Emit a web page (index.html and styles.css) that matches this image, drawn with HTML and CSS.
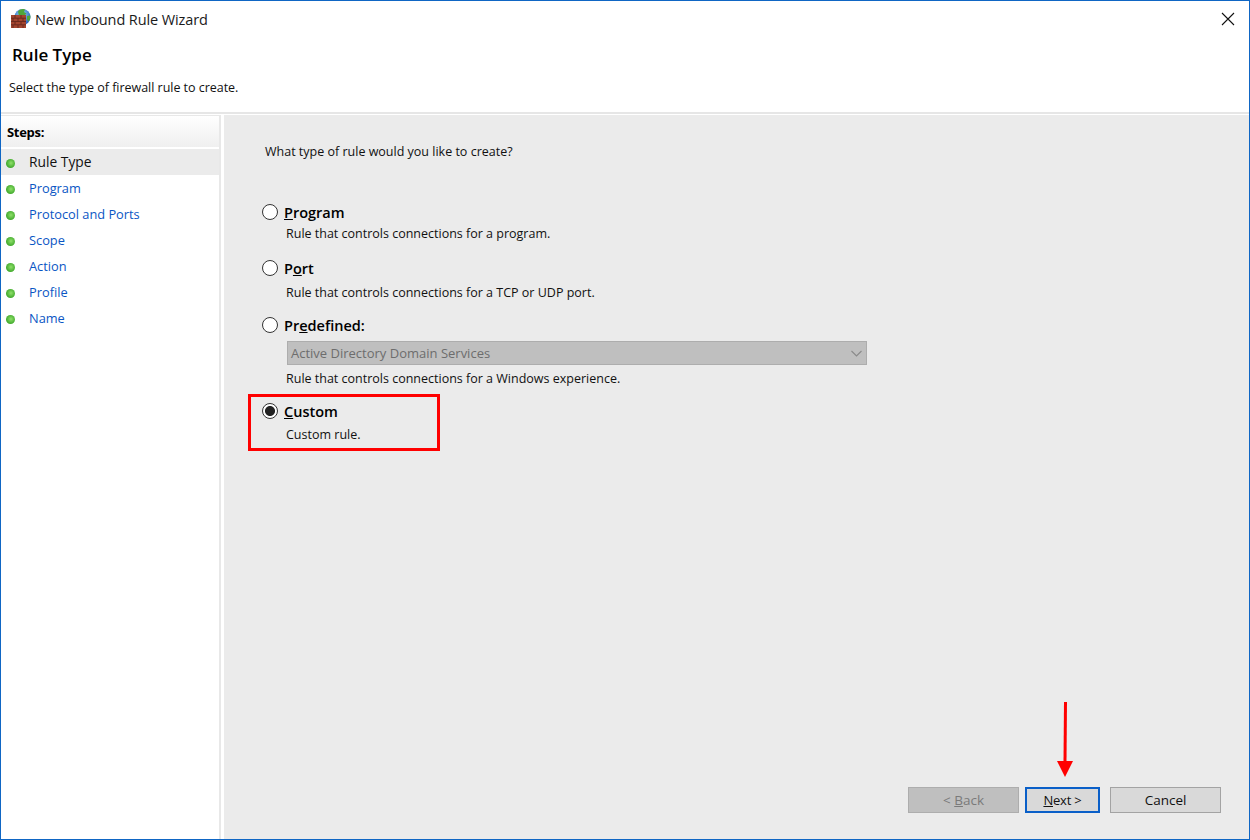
FILE: index.html
```html
<!DOCTYPE html>
<html lang="en">
<head>
<meta charset="utf-8">
<title>New Inbound Rule Wizard</title>
<link rel="stylesheet" href="styles.css">
</head>
<body>
<div class="window">
  <header class="header">
    <div class="titlebar">
      <svg class="app-icon" width="22" height="22" viewBox="0 0 22 22">
        <defs>
          <radialGradient id="globe" cx="0.45" cy="0.35" r="0.7">
            <stop offset="0" stop-color="#9ad6f7"/>
            <stop offset="1" stop-color="#1a55b8"/>
          </radialGradient>
        </defs>
        <circle cx="12.500" cy="9" r="8" fill="url(#globe)"/>
        <path d="M8 3.500c2-2.500 5-3 7-2l-1 2.500 2.500 1.500-2.500 2.500-2-1-3 1.500z" fill="#4fa63c"/>
        <path d="M17 8l3.400-.5c.2 2.500-.5 4.500-1.900 6l-1.500-2z" fill="#4fa63c"/>
        <rect x="1" y="7" width="15" height="13" fill="#a3452f"/>
        <path d="M1 10.200h15M1 13.500h15M1 16.800h15M5 7v3M11 7v3M3 10v3.500M8 10v3.500M13 10v3.500M5 13.500v3.500M11 13.500v3.500M3 17v3M8 17v3M13 17v3" stroke="#6d2a1e" stroke-width="1" fill="none"/>
      </svg>
      <span class="title">New Inbound Rule Wizard</span>
      <svg class="close" width="14" height="14" viewBox="0 0 14 14">
        <path d="M1 1l12 12M13 1L1 13" stroke="#111" stroke-width="1.100" fill="none"/>
      </svg>
    </div>
    <h1 class="page-title">Rule Type</h1>
    <p class="page-sub">Select the type of firewall rule to create.</p>
  </header>

  <div class="main">
    <nav class="steps">
      <div class="steps-head">Steps:</div>
      <ul class="step-list">
        <li class="step current"><span class="dot"></span>Rule Type</li>
        <li class="step"><span class="dot"></span>Program</li>
        <li class="step"><span class="dot"></span>Protocol and Ports</li>
        <li class="step"><span class="dot"></span>Scope</li>
        <li class="step"><span class="dot"></span>Action</li>
        <li class="step"><span class="dot"></span>Profile</li>
        <li class="step"><span class="dot"></span>Name</li>
      </ul>
    </nav>

    <section class="content">
      <p class="question">What type of rule would you like to create?</p>

      <div class="options">
        <div class="option opt-program">
          <div class="opt-label"><span class="radio"></span><b><u>P</u>rogram</b></div>
          <p class="opt-desc">Rule that controls connections for a program.</p>
        </div>
        <div class="option opt-port">
          <div class="opt-label"><span class="radio"></span><b>P<u>o</u>rt</b></div>
          <p class="opt-desc">Rule that controls connections for a TCP or UDP port.</p>
        </div>
        <div class="option opt-predefined">
          <div class="opt-label"><span class="radio"></span><b>Pr<u>e</u>defined:</b></div>
          <div class="select">
            <span>Active Directory Domain Services</span>
            <svg width="11" height="7" viewBox="0 0 11 7"><path d="M.5 1l5 5 5-5" stroke="#8a8a8a" stroke-width="1.100" fill="none"/></svg>
          </div>
          <p class="opt-desc">Rule that controls connections for a Windows experience.</p>
        </div>
        <div class="option opt-custom">
          <div class="opt-label"><span class="radio checked"></span><b><u>C</u>ustom</b></div>
          <p class="opt-desc">Custom rule.</p>
          <div class="highlight"></div>
        </div>
      </div>

      <div class="buttons">
        <button class="btn disabled" type="button">&lt; <u>B</u>ack</button>
        <button class="btn primary" type="button"><u>N</u>ext &gt;</button>
        <button class="btn cancel" type="button">Cancel</button>
        <svg class="arrow" width="20" height="76" viewBox="0 0 20 76">
          <path d="M10.500 0L10 60" stroke="#f00" stroke-width="3" fill="none"/>
          <path d="M2 59h16l-8 16z" fill="#f00"/>
        </svg>
      </div>
    </section>
  </div>
</div>
</body>
</html>
```
FILE: styles.css
```css
* { box-sizing: border-box; }
html, body { margin: 0; padding: 0; }
body {
  width: 1250px;
  height: 840px;
  font-family: "Open Sans", "Noto Sans", "Liberation Sans", sans-serif;
  font-size: 12.5px;
  color: #111;
  background: #fff;
  overflow: hidden;
}
p, h1, ul { margin: 0; padding: 0; }
.window {
  width: 1250px;
  height: 840px;
  border: 1px solid #0f66c4;
  display: flex;
  flex-direction: column;
  background: #fff;
}
.header {
  height: 113px;
  flex: none;
  border-bottom: 2px solid #e6e6e6;
  padding-top: 7px;
}
.titlebar {
  display: flex;
  align-items: center;
  height: 22px;
  padding-left: 9px;
  padding-right: 14px;
}
.app-icon { flex: none; margin-right: 3px; }
.title { font-size: 14.5px; letter-spacing: -0.1px; color: #1a1a1a; flex: 1; }
.close { flex: none; }
.page-title {
  font-size: 17px;
  font-weight: 600;
  line-height: 22px;
  margin: 14px 0 0 11px;
  color: #000;
}
.page-sub {
  line-height: 18px;
  margin: 13px 0 0 8px;
  letter-spacing: -0.03px;
}
.main {
  flex: 1;
  display: flex;
  min-height: 0;
  padding-top: 1px;
  gap: 3px;
}
.steps {
  width: 220px;
  flex: none;
  border-right: 2px solid #e8e8e8;
  border-top: 1px solid #e8e8e8;
  background: #fff;
}
.steps-head {
  height: 31px;
  padding-left: 6px;
  padding-top: 1px;
  line-height: 30px;
  font-size: 13px;
  font-weight: 700;
  background: linear-gradient(#fff, #efefef);
  color: #000;
  letter-spacing: -0.3px;
}
.step-list { list-style: none; margin-top: 2px; font-size: 12.8px; }
.step {
  height: 26px;
  display: flex;
  align-items: center;
  padding-left: 5px;
  color: #0a56c4;
}
.step.current { background: #ebebeb; color: #111; font-size: 13.8px; padding-bottom: 2px; }
.dot {
  width: 9px;
  height: 9px;
  border-radius: 50%;
  margin-right: 14px;
  flex: none;
  background: radial-gradient(circle at 55% 45%, #8fe06a, #3fa82b 70%);
  position: relative;
  top: 1px;
}
.current .dot { top: 2px; }
.content {
  flex: 1;
  background: #ebebeb;
  display: flex;
  flex-direction: column;
  padding-left: 41px;
  min-width: 0;
}
.question { margin-top: 28px; line-height: 18px; }
.options { margin-left: -3px; margin-top: 42px; flex: 1; }
.option { position: relative; }
.opt-label {
  display: flex;
  align-items: center;
  height: 20px;
  font-size: 14.5px;
  color: #000;
}
.opt-label b { font-weight: 600; margin-left: 6px; padding-bottom: 2px; }
.radio {
  width: 16px;
  height: 16px;
  border-radius: 50%;
  border: 1.500px solid #333;
  background: #fff;
  flex: none;
  position: relative;
  top: -1px;
}
.radio.checked { background: radial-gradient(circle, #222 0 4.600px, #fff 5.400px); }
.opt-desc { margin: 2px 0 0 24px; line-height: 18px; }
.opt-port { margin-top: 16px; }
.opt-predefined { margin-top: 14px; }
.opt-custom { margin-top: 14px; }
.opt-port .opt-desc { margin-top: 5px; }
.opt-custom .opt-desc { margin-top: 4px; }
.select {
  width: 580px;
  height: 24px;
  margin: 5px 0 0 25px;
  background: #bfbfbf;
  border: 1px solid #adadad;
  display: flex;
  align-items: center;
  justify-content: space-between;
  padding: 0 4px 0 3px;
  color: #6d6d6d;
  font-size: 13px;
}
.opt-predefined .opt-desc { margin-top: 5px; }
.highlight {
  position: absolute;
  left: -14px;
  top: -8px;
  width: 192px;
  height: 57px;
  border: 3px solid #f00;
}
.buttons {
  position: relative;
  display: flex;
  padding-left: 643px;
  height: 52px;
  flex: none;
}
.btn {
  height: 26px;
  font: inherit;
  font-size: 13.5px;
  color: #111;
  background: #d9d9d9;
  border: 1px solid #a3a3a3;
  padding: 0;
}
.btn.disabled { width: 111px; background: #bfbfbf; border-color: #adadad; color: #7a7a7a; }
.btn.primary { width: 75px; margin-left: 6px; border: 2px solid #0a5fc8; font-size: 13px; letter-spacing: -0.2px; }
.btn.cancel { width: 111px; margin-left: 10px; }
.arrow { position: absolute; left: 790px; top: -85px; }
```
